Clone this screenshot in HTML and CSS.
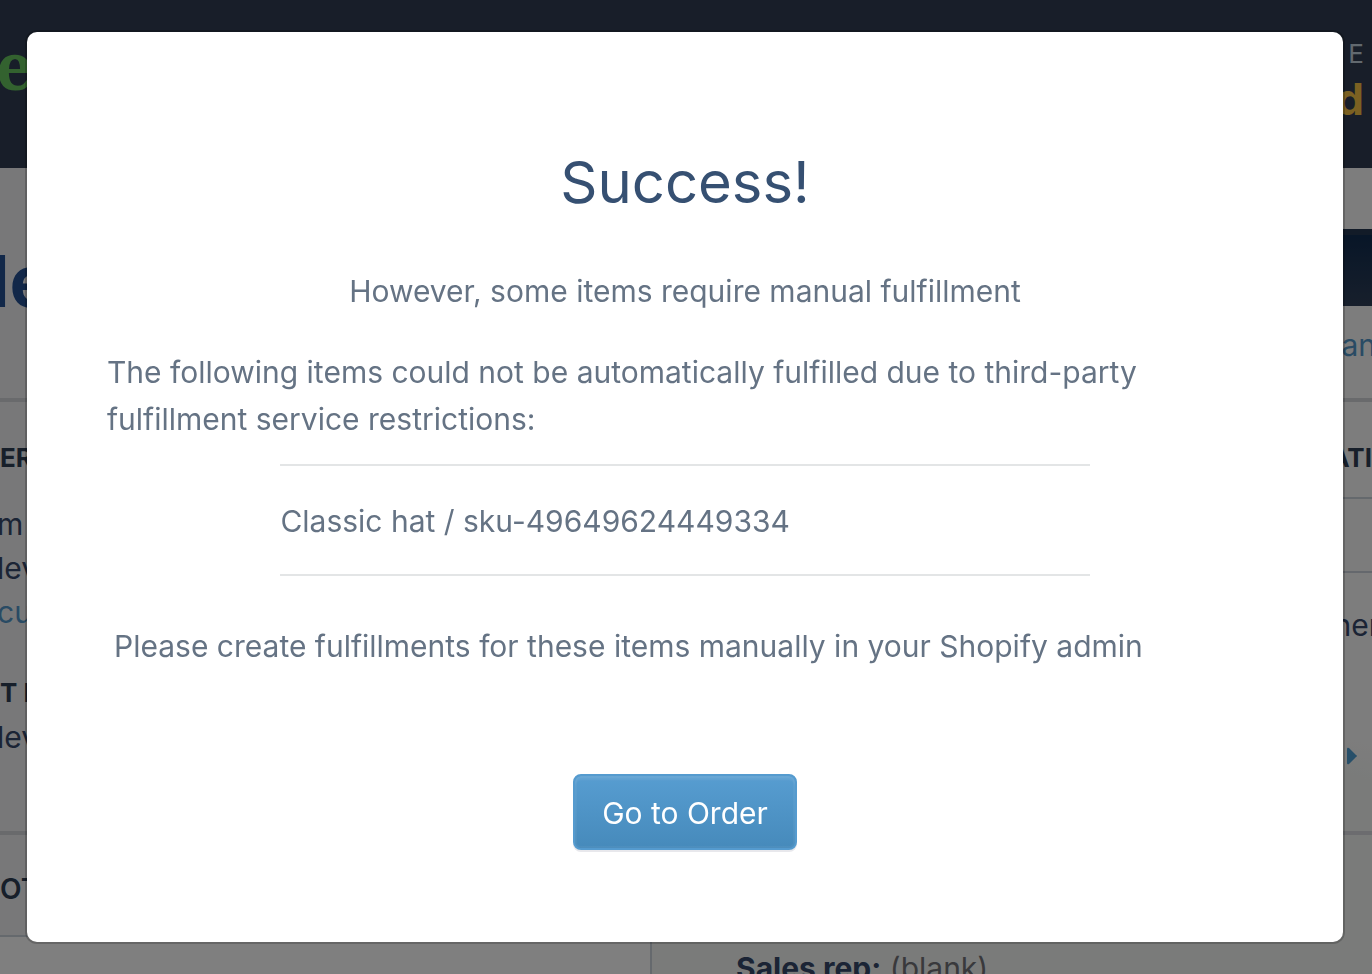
FILE: index.html
```
<!DOCTYPE html>
<html lang="en">
<head>
    <meta charset="UTF-8">
    <meta name="viewport" content="width=device-width, initial-scale=1.0">
    <title>Order fulfillment</title>
    <link rel="stylesheet" href="styles.css">
</head>
<body>
    <div class="page">
        <header class="site-header">
            <div class="logo">e</div>
            <div class="account">
                <span class="account-label">E</span>
                <span class="account-name">d</span>
            </div>
        </header>

        <div class="title-bar">
            <h1>le</h1>
            <div class="title-actions">
                <button class="dark-btn" aria-label="Order actions"></button>
                <a class="link" href="#">an</a>
            </div>
        </div>

        <div class="columns">
            <div class="column left">
                <section class="customer">
                    <h3>ER</h3>
                    <p>m<br>lev<br><a class="link" href="#">cu</a></p>
                    <h3>T B</h3>
                    <p>lev</p>
                </section>
                <section class="other">
                    <h2>OT</h2>
                </section>
            </div>
            <div class="column right">
                <h3 class="date-title">ATI</h3>
                <div class="date-row"></div>
                <section class="items">
                    <p>ner</p>
                    <svg class="arrow" width="12" height="18" viewBox="0 0 12 18"><path d="M1 2Q1 0 3 1L10 8Q12 9 10 10L3 17Q1 18 1 16Z" fill="#4f9fd2"/></svg>
                </section>
                <p class="rep"><strong>Sales rep:</strong> (blank)</p>
            </div>
        </div>
    </div>

    <div class="overlay">
        <div class="modal" role="dialog" aria-labelledby="modal-title">
            <h2 class="modal-title" id="modal-title">Success!</h2>
            <p class="subtitle">However, some items require manual fulfillment</p>
            <p class="reason">The following items could not be automatically fulfilled due to third-party fulfillment service restrictions:</p>
            <ul class="item-list">
                <li>Classic hat / sku-49649624449334</li>
            </ul>
            <p class="note">Please create fulfillments for these items manually in your Shopify admin</p>
            <button class="btn">Go to Order</button>
        </div>
    </div>
</body>
</html>
```
FILE: styles.css
```
* {
    box-sizing: border-box;
}

body {
    margin: 0;
    height: 100vh;
    overflow: hidden;
    font-family: Inter, "Liberation Sans", sans-serif;
    font-size: 30px;
    line-height: 47px;
    color: #657384;
}

h1, h2, h3, p, ul {
    margin: 0;
    padding: 0;
    font-weight: normal;
}

button {
    font: inherit;
    cursor: pointer;
}

/* order page behind the dialog */
.page {
    height: 100vh;
    overflow: hidden;
    background-color: #f0f1f3;
    color: #36486a;
}

.link {
    color: #5297c9;
    text-decoration: none;
}

.site-header {
    display: flex;
    justify-content: space-between;
    height: 168px;
    padding: 30px 8px;
    background-color: #303d52;
}

.logo {
    margin-left: -12px;
    font-family: "Noto Serif", "DejaVu Serif", serif;
    font-size: 64px;
    font-weight: bold;
    line-height: 72px;
    color: #66c55f;
}

.account {
    display: flex;
    flex-direction: column;
    align-items: flex-end;
    font-size: 26px;
    color: #c4d2de;
}

.account-name {
    font-size: 44px;
    font-weight: bold;
    line-height: 44px;
    color: #f6c344;
}

.title-bar {
    display: flex;
    justify-content: space-between;
    height: 234px;
    border-bottom: 4px solid #d3d5d9;
}

.title-bar h1 {
    margin-left: -10px;
    padding-top: 69px;
    font-size: 72px;
    font-weight: bold;
    line-height: 88px;
    color: #245092;
}

.title-actions {
    display: flex;
    flex-direction: column;
    align-items: flex-end;
    width: 720px;
    padding-top: 61px;
    background-color: #fbfafa;
    overflow: hidden;
    white-space: nowrap;
}

.title-actions .link {
    margin-right: -4px;
    padding-top: 16px;
}

.dark-btn {
    width: 240px;
    height: 77px;
    border: none;
    border-top: 6px solid #253650;
    background-image: linear-gradient(#102c50, #2f3f58);
}

.columns {
    display: flex;
    height: 572px;
}

.column {
    overflow: hidden;
}

.column h3 {
    font-size: 26px;
    font-weight: bold;
    line-height: 44px;
    color: #2f3e54;
}

.left {
    width: 652px;
    background-color: #fff;
    border-right: 2px solid #cbd3db;
}

.left p {
    margin-left: -3px;
    line-height: 44px;
}

.customer {
    height: 433px;
    padding-top: 34px;
    background-color: #f0f1f3;
    border-bottom: 4px solid #d3d5d9;
}

.customer p {
    padding-top: 22px;
    padding-bottom: 37px;
}

.customer h3 + p:last-child {
    padding-top: 0;
}

.other {
    height: 102px;
    padding-top: 32px;
    background-color: #f0f1f3;
    border-bottom: 2px solid #cbd3db;
}

.other h2 {
    font-size: 28px;
    font-weight: 600;
    line-height: 44px;
    color: #2f3e54;
}

.right {
    flex: 1;
    background-color: #f4f7f5;
}

.date-title {
    height: 97px;
    padding-top: 34px;
    text-align: right;
    background-color: #fbfafa;
    border-bottom: 2px solid #cbd3db;
}

.date-row {
    height: 74px;
    background-color: #f9f9f9;
    border-bottom: 2px solid #cbd0da;
}

.items {
    display: flex;
    flex-direction: column;
    align-items: flex-end;
    gap: 98px;
    height: 262px;
    padding-top: 29px;
    background-image: linear-gradient(195deg, #fbfafa 38%, #f4f7f5 46%);
    border-bottom: 4px solid #d8d9df;
}

.items p {
    margin-right: -8px;
}

.arrow {
    margin-right: 14px;
}

.rep {
    padding: 110px 0 0 84px;
    color: #727278;
}

.rep strong {
    color: #36486a;
}

/* dialog */
.overlay {
    position: fixed;
    inset: 0;
    padding: 32px 29px 0 27px;
    background-color: rgba(0, 0, 0, 0.5);
}

.modal {
    display: flex;
    flex-direction: column;
    align-items: center;
    padding: 110px 80px 92px;
    border-radius: 10px;
    background-color: #fff;
    box-shadow: 0 0 0 2px rgba(0, 0, 0, 0.2);
}

.modal-title {
    font-size: 58px;
    line-height: 80px;
    color: #365072;
}

.subtitle {
    padding-top: 46px;
}

.reason {
    align-self: stretch;
    padding: 34px 80px 21px 0;
}

.item-list {
    width: 70%;
    list-style: none;
    border-top: 2px solid #e3e5e6;
    border-bottom: 2px solid #e3e5e6;
}

.item-list li {
    padding: 32px 0 29px;
}

.note {
    align-self: stretch;
    padding: 47px 0 104px 7px;
}

.btn {
    height: 76px;
    padding: 2px 27px 0;
    border: 2px solid #559bcf;
    border-radius: 8px;
    background-image: linear-gradient(#579dd1, #468abb);
    box-shadow: 0 2px 0 #e8e8ec, inset 0 4px 2px rgba(255, 255, 255, 0.08), inset 0 0 0 2px rgba(255, 255, 255, 0.04);
    color: #fff;
}
```
